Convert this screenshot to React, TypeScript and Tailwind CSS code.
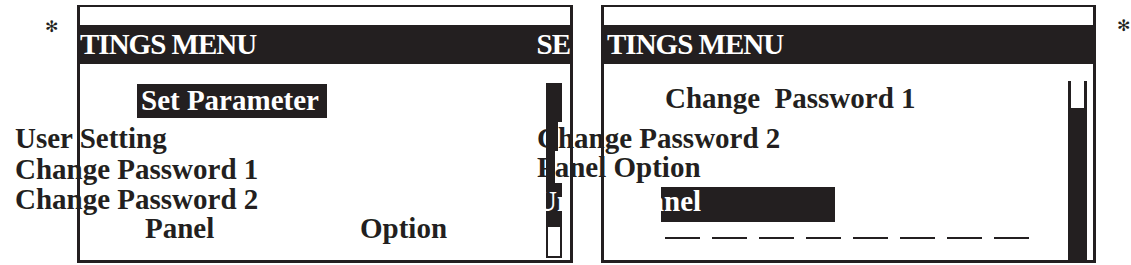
import React from "react";

const INK = "bg-[#231f20]";

function Frame() {
  return (
    <div className="pointer-events-none absolute inset-0 z-30 border-x-[3px] border-t-2 border-b-[3px] border-[#231f20]" />
  );
}

export default function App() {
  const dashes = [0, 1, 2, 3, 4, 5, 6, 7];
  return (
    <div
      className="relative isolate flex h-[265px] w-[1131px] items-start overflow-hidden bg-white pt-[5px] font-bold text-[#231f20]"
      style={{ fontFamily: '"Liberation Serif", "Times New Roman", serif' }}
    >
      {/* left asterisk */}
      <div
        className="w-[77px] pl-[45px] pt-[14px] text-[16px] font-normal leading-[16px]"
        style={{ fontFamily: '"DejaVu Sans", sans-serif' }}
      >
        ✻
      </div>

      {/* left panel */}
      <div className="relative flex h-[258px] w-[496px] flex-col px-[3px] pt-[2px] pb-[3px]">
        <Frame />
        <div className="h-[18px]" />
        <div className={`flex h-[39px] items-center justify-between overflow-hidden ${INK} text-[29px] leading-[39px] tracking-[-1px] text-white`}>
          <span className="whitespace-nowrap">TINGS MENU</span>
          <span className="whitespace-nowrap">SE</span>
        </div>
        <div className="flex flex-1 justify-between pl-[57px] pr-[8px] pt-[19px]">
          <div className={`mt-[1px] h-[34px] w-[190px] ${INK} px-[4px] text-[29px] leading-[32px] text-white`}>
            Set Parameter
          </div>
          <div className={`relative z-[15] flex h-[175px] w-[16px] flex-col justify-end ${INK} p-[2px]`}>
            <div className="h-[29px] bg-white" />
          </div>
        </div>
      </div>

      {/* gap */}
      <div className="w-[28px]" />

      {/* right panel */}
      <div className="relative flex h-[258px] w-[495px] flex-col px-[3px] pt-[2px] pb-[3px]">
        <Frame />
        <div className="h-[18px]" />
        <div className={`h-[39px] overflow-hidden ${INK} pl-[3px] text-[29px] leading-[39px] tracking-[-1px] text-white`}>
          <span className="whitespace-nowrap">TINGS MENU</span>
        </div>
        <div className="flex flex-1 justify-between pr-[6px]">
          <div className="flex flex-col pl-[57px] pt-[20px]">
            <div className="ml-[4px] whitespace-pre text-[29px] leading-[29px]">Change  Password 1</div>
            <div className={`mt-[74px] h-[35px] w-[174px] ${INK}`} />
            <div className="ml-[4px] mt-[15px] flex gap-[12px]">
              {dashes.map((d) => (
                <div key={d} className={`h-[2px] w-[35px] ${INK}`} />
              ))}
            </div>
          </div>
          <div className={`mt-[17px] flex h-[179px] w-[19px] flex-col ${INK} px-[3px]`}>
            <div className="h-[27px] bg-white" />
          </div>
        </div>
      </div>

      {/* right asterisk */}
      <div
        className="pl-[21px] pt-[13px] text-[16px] font-normal leading-[16px]"
        style={{ fontFamily: '"DejaVu Sans", sans-serif' }}
      >
        ✻
      </div>

      {/* overflowing text lines (drawn over the panels) */}
      <div className="absolute left-[15px] top-[124px] whitespace-pre text-[29px] leading-[29px]">User Setting</div>
      <div className="absolute left-[15px] top-[155px] whitespace-pre text-[29px] leading-[29px]">Change Password 1</div>
      <div className="absolute left-[15px] top-[185px] whitespace-pre text-[29px] leading-[29px]">Change Password 2</div>
      <div className="absolute left-[145px] top-[214px] whitespace-pre text-[29px] leading-[29px]">Panel</div>
      <div className="absolute left-[360px] top-[214px] whitespace-pre text-[29px] leading-[29px]">Option</div>

      <div className="absolute left-[537px] top-[124px] whitespace-pre text-[29px] leading-[29px]">
        C<span className="relative z-20 bg-white">h</span>ange Password 2
      </div>
      <div className="absolute left-[537px] top-[153px] whitespace-pre text-[29px] leading-[29px]">
        P<span className="relative z-20 bg-white">a</span>nel Option
      </div>
      <div className="absolute left-[536px] top-[187px] z-20 whitespace-pre text-[29px] leading-[29px] text-white">
        Unlock Panel
      </div>
    </div>
  );
}
